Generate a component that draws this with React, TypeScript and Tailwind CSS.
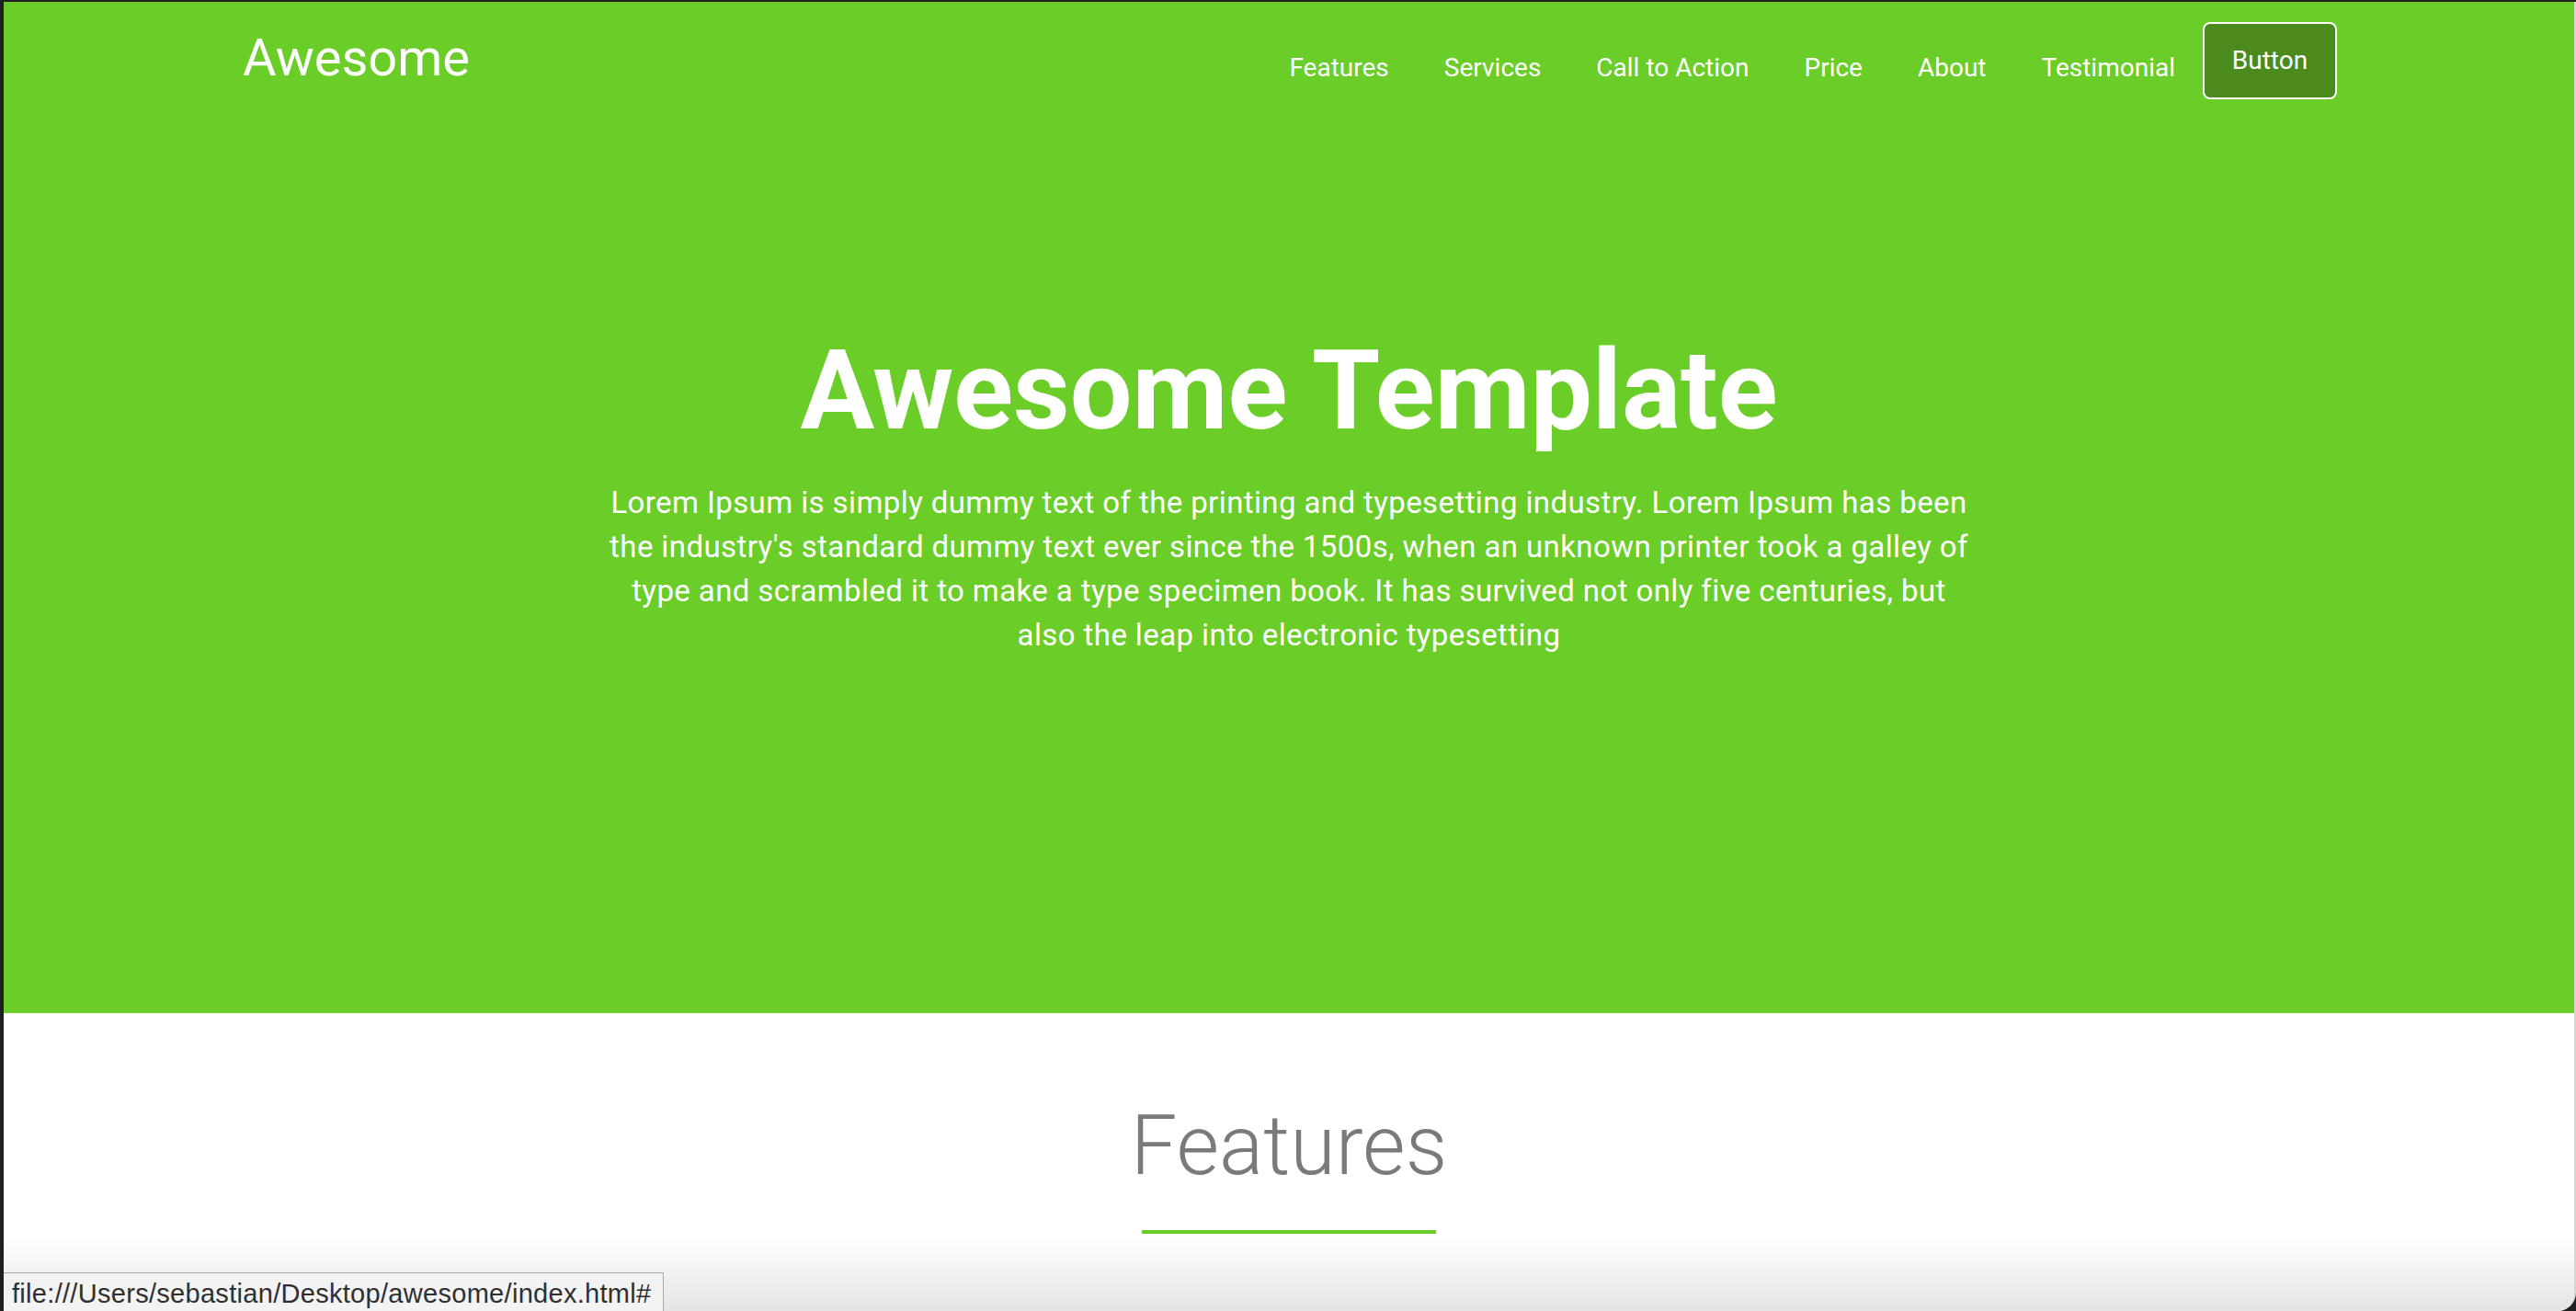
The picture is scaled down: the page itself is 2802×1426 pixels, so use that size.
import { Fragment } from 'react';

const links = ['Features', 'Services', 'Call to Action', 'Price', 'About', 'Testimonial'];

const App = () => {
  return (
    <div className="h-[1426px] w-[2802px] bg-[#1d1f22] pl-[4px] pt-[2px] overflow-hidden">
      <div
        className="relative h-[1424px] bg-white rounded-br-[20px] overflow-hidden border-r-2 border-[#d4d8d0]"
        style={{ fontFamily: 'Roboto, "Open Sans", sans-serif' }}
      >
        {/* hero */}
        <header className="h-[1100px] bg-[#6acd28] text-white">
          <nav className="mx-auto w-[2280px] h-[106px] flex items-start justify-between">
            <a href="#" className="pt-[33px] text-[56px] leading-none pl-[2px]">
              Awesome
            </a>
            <div className="flex items-start pt-[22px]">
              {links.map((l) => (
                <Fragment key={l}>
                  <a href="#" className="px-[30px] pt-[36px] text-[28px] leading-none">
                    {l}
                  </a>
                </Fragment>
              ))}
              <button className="w-[146px] h-[84px] flex items-center justify-center border-2 border-white rounded-[8px] bg-[#4b8b1d] text-[28px] leading-[1.5]">
                Button
              </button>
            </div>
          </nav>

          <div className="flex flex-col items-center">
            <h1 className="mt-[245px] text-[120px] font-bold leading-[1.2]">Awesome Template</h1>
            <p className="mt-[26px] w-[1489px] text-center text-[33px] tracking-[0.4px] leading-[48px]">
              Lorem Ipsum is simply dummy text of the printing and typesetting industry. Lorem Ipsum has been
              the industry's standard dummy text ever since the 1500s, when an unknown printer took a galley of
              type and scrambled it to make a type specimen book. It has survived not only five centuries, but
              also the leap into electronic typesetting
            </p>
          </div>
        </header>

        {/* features */}
        <section className="flex flex-col items-center">
          <h2 className="mt-[91px] text-[90px] font-light leading-[1.2] text-[#7a7a7a]">Features</h2>
          <div className="mt-[37px] w-[320px] h-[4px] bg-[#6acd28]" />
        </section>

        {/* bottom shade */}
        <div className="absolute left-0 right-0 bottom-0 h-[80px] bg-gradient-to-b from-transparent to-[#e4e4e4]" />

        {/* status url */}
        <div
          className="absolute left-0 top-[1382px] h-[60px] w-[718px] border-t border-r border-[#a9a9a9] bg-[#f3f3f3] pl-[9px] pt-[8px] text-[29px] tracking-[0.3px] leading-none text-[#2f2f2f]"
          style={{ fontFamily: '"Liberation Sans", Arial, sans-serif' }}
        >
          file:///Users/sebastian/Desktop/awesome/index.html#
        </div>
      </div>
    </div>
  );
};

export default App;
